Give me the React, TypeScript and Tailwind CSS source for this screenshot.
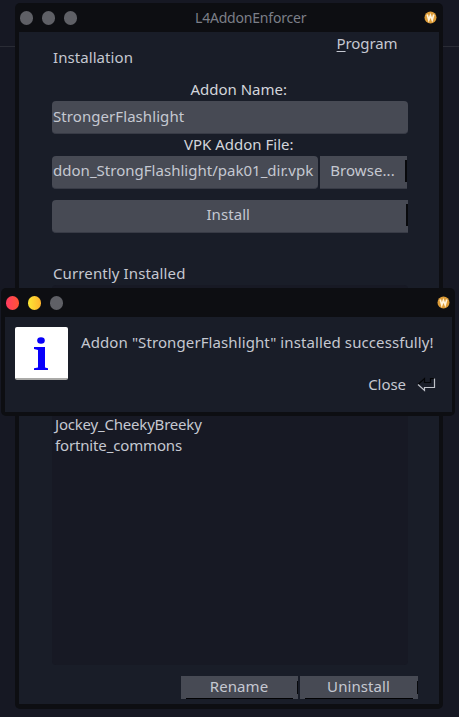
import type { ReactNode } from "react";

function Badge() {
  return (
    <svg width="13" height="13" viewBox="0 0 13 13" className="shrink-0">
      <circle cx="6.5" cy="6.5" r="6" fill="#dd9c38" />
      <path d="M3.2 3.5 L4.8 9 L6.4 4.5 L8.2 9 L9.8 3.5" fill="none" stroke="#fff3da" strokeWidth="1.7" />
    </svg>
  );
}

function Dots({ active }: { active?: boolean }) {
  return (
    <div className="flex gap-[9px]">
      <div className={`h-[14px] w-[13px] rounded-full ${active ? "bg-linear-to-r from-[#ff3a60] to-[#ff5330]" : "bg-[#5f6066]"}`} />
      <div className={`h-[14px] w-[13px] rounded-full ${active ? "bg-linear-to-r from-[#fbe735] to-[#ffb32d]" : "bg-[#5f6066]"}`} />
      <div className="h-[14px] w-[13px] rounded-full bg-[#5f6066]" />
    </div>
  );
}

function Button({ children, className, bottom }: { children: ReactNode; className: string; bottom?: boolean }) {
  return (
    <div className={`relative flex justify-center bg-[#474a54] ${className}`}>
      {children}
      <div className={`absolute right-0 bg-[#08090c] ${bottom ? "top-[5px] bottom-[5px] w-px" : "top-[4px] bottom-[6px] w-[2px]"}`} />
      {bottom && <div className="absolute right-[5px] bottom-0 left-[5px] h-px bg-[#020204]" />}
    </div>
  );
}

export default function App() {
  return (
    <div className="relative h-[717px] w-[459px] overflow-hidden bg-[#161823] pt-[3px] font-['Noto_Sans',sans-serif] text-[15px] leading-5 tracking-[0.07px] whitespace-nowrap text-[#c5c8d1]">
      <div className="absolute top-[46px] left-0 h-px w-full bg-[#2a2c35]" />
      <div className="relative ml-[15px] h-[706px] w-[428px] rounded-[5px] bg-[#0d0e12] px-1 pb-[5px]">
        <div className="flex h-[29px] items-center pr-[2px] pl-px">
          <Dots />
          <span className="ml-[118px] text-[14px] tracking-[-0.2px] text-[#7c7f88]">L4AddonEnforcer</span>
          <div className="ml-auto"><Badge /></div>
        </div>
        <div className="flex h-[672px] flex-col bg-[#191d28] pr-[31px] pl-[32.5px]">
          <div className="mr-[10.5px] flex h-[15px] justify-end leading-[22px] tracking-[-0.1px]"><span><span className="underline underline-offset-2">P</span>rogram</span></div>
          <div className="h-5 pl-[1.5px]">Installation</div>
          <div className="mt-3 h-5 pl-[18px] text-center tracking-normal text-[#d3d5db]">Addon Name:</div>
          <div className="mt-[2px] h-[33px] rounded-[4px] border-b border-[#383b46] bg-[#474a54] pt-[5px] pl-[1.5px]">StrongerFlashlight</div>
          <div className="h-[22px] pl-[18px] text-center tracking-normal text-[#d3d5db]"><span className="inline-block leading-[19px]">VPK Addon File:</span></div>
          <div className="flex h-[33px] gap-[2px]">
            <div className="w-[266.5px] rounded-[4px] border-b border-[#383b46] bg-[#474a54] pt-[4px] pl-[1.5px] tracking-[0.02px]">ddon_StrongFlashlight/pak01_dir.vpk</div>
            <Button className="w-[87px] border-b border-[#383b46] pt-[4px] pr-[2px]">Browse...</Button>
          </div>
          <Button className="mt-[11px] h-[33px] rounded-l-[4px] border-b border-[#383b46] pt-[4px] pr-[3px]">Install</Button>
          <div className="mt-[30px] h-5 pl-[1.5px] tracking-[0.12px]">Currently Installed</div>
          <div className="mt-[2px] h-[380px] rounded-[4px] bg-[#171924] pt-[130px] pl-[3.5px]">
            <div className="h-[21px] leading-[19px] tracking-[-0.2px]">Jockey_CheekyBreeky</div>
            <div className="h-[21px] leading-[19px] tracking-[-0.15px]">fortnite_commons</div>
          </div>
          <div className="mt-[11px] -mr-[10px] flex h-[23px] justify-end gap-[2px]">
            <Button bottom className="w-[117px] pr-[1px]">Rename</Button>
            <Button bottom className="w-[118px] pr-[1px]">Uninstall</Button>
          </div>
        </div>
      </div>
      <div className="absolute top-[288px] left-px h-[128px] w-[454px] rounded-[5px] bg-[#0d0e12] pr-[3px] pb-1 pl-1">
        <div className="flex h-[29px] items-center pl-px pr-[2px]">
          <Dots active />
          <div className="ml-auto"><Badge /></div>
        </div>
        <div className="flex h-[95px] flex-col bg-[#191d28]">
          <div className="flex h-[62px] pt-[10px] pl-[10px]">
            <div className="flex h-[53px] w-[53px] justify-center rounded-[2px] border-b-2 border-[#aaaaa8] bg-white">
              <svg width="53" height="51" viewBox="0 0 53 51">
                <ellipse cx="26" cy="13.5" rx="3.8" ry="3.2" fill="#0800fa" />
                <path d="M19 20H30V40.5L33 41.3V43H19V41.3L23 40.5V23L19 22Z" fill="#0800fa" />
              </svg>
            </div>
            <span className="mt-[5px] ml-[13px] tracking-[0.1px]">Addon "StrongerFlashlight" installed successfully!</span>
          </div>
          <div className="-mt-[5px] mr-[16px] flex justify-end gap-[11px]">
            <span className="tracking-[-0.05px]">Close</span>
            <svg className="mt-[2px]" width="19" height="16" viewBox="0 0 19 16">
              <path d="M1 8.5L7.5 2.5V6.5H13.5V2.5H18" fill="none" stroke="#030406" strokeWidth="1.2" />
              <path d="M1 8.5L7.5 14.5V11.5H17.5V2.5" fill="none" stroke="#bfc2c9" strokeWidth="1.2" />
            </svg>
          </div>
        </div>
      </div>
    </div>
  );
}
